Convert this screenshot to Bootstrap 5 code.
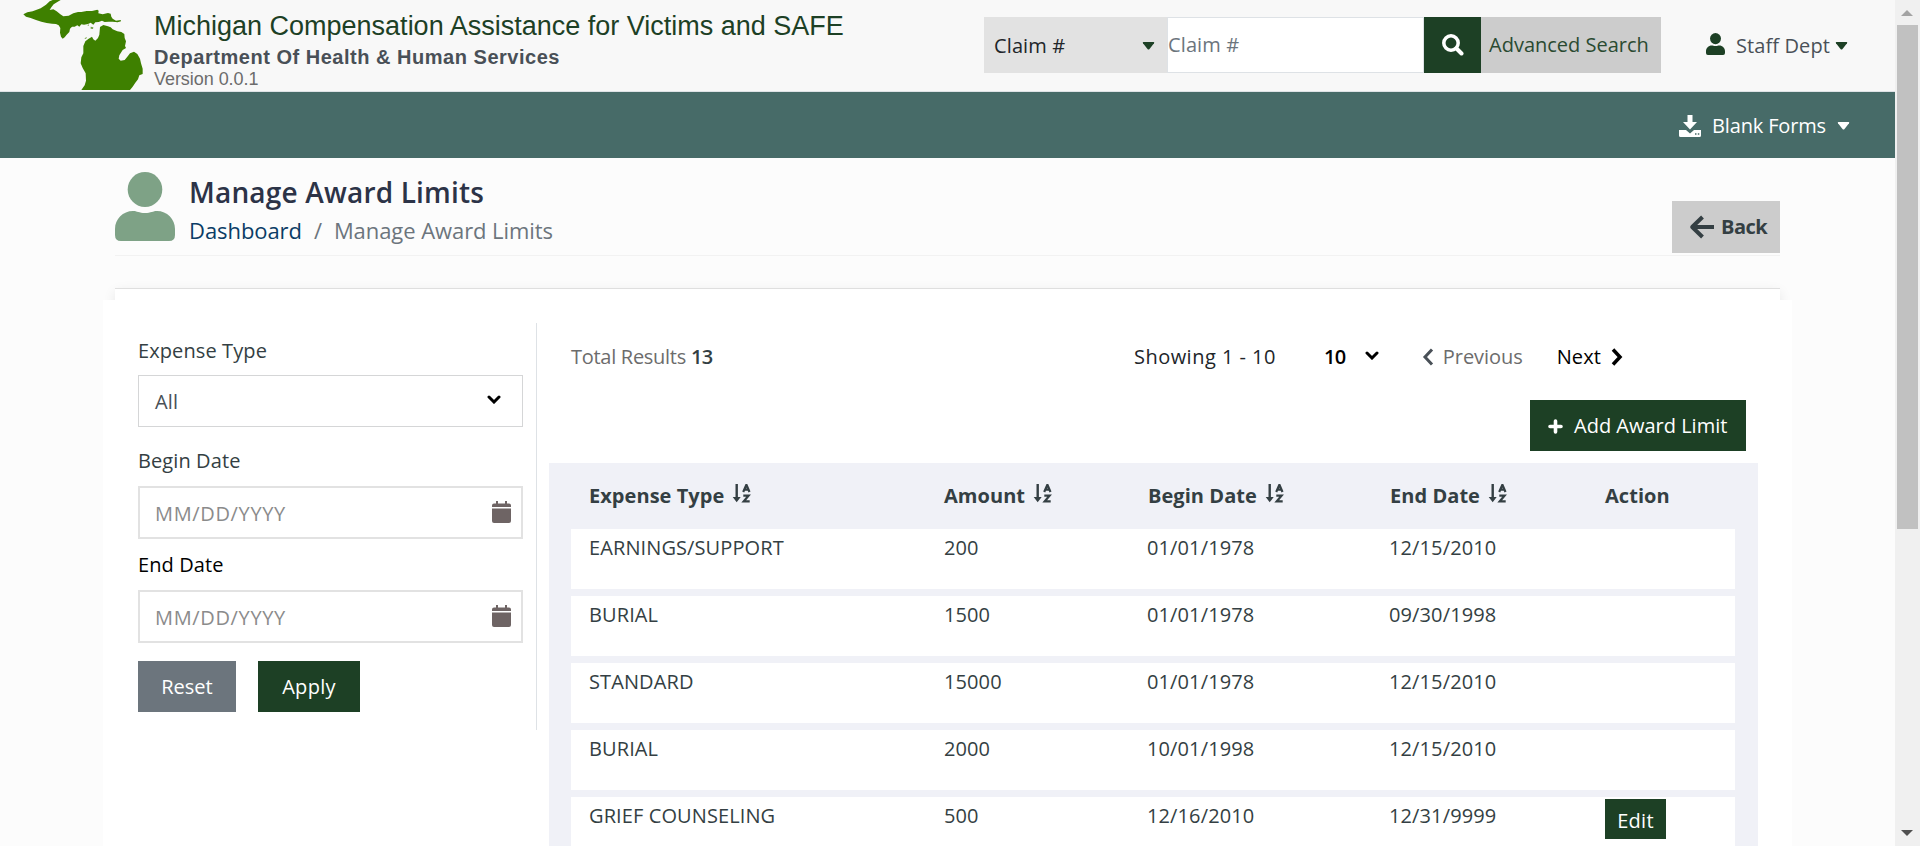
<!DOCTYPE html>
<html lang="en">
<head>
<meta charset="utf-8">
<title>Manage Award Limits</title>
<link href="https://cdn.jsdelivr.net/npm/bootstrap@5.3.0/dist/css/bootstrap.min.css" rel="stylesheet">
<script src="https://cdn.jsdelivr.net/npm/bootstrap@5.3.0/dist/js/bootstrap.bundle.min.js" defer></script>
<style>
:root{--forest:#1d4025;--slate:#343f43}
body{font-family:"Open Sans","Noto Sans",sans-serif;font-size:20px;line-height:30px;letter-spacing:.1px;color:var(--slate);background:#fcfcfc;height:846px;overflow:hidden}
svg{display:block;flex:none}
.page-area{min-width:0}
.top-bar{height:92px;background:#f8f8f8;border-bottom:1px solid #dee2e6;padding-right:47px}
.brand{padding-left:16px;font-family:"Liberation Sans",Arial,sans-serif;letter-spacing:0}
.brand-text{padding-top:10px;margin-left:-2px}
.brand-title{font-size:27px;line-height:33px;color:var(--forest)}
.brand-dept{font-size:20px;line-height:28px;font-weight:700;color:#495057;letter-spacing:.52px}
.brand-ver{font-size:18px;line-height:17px;color:#6c6c6c;letter-spacing:-.05px}
.search-set{margin:17px 45px 0 0;height:56px}
.kind{width:183px;background:#e2e2e2;padding:2px 12px 0 10px;color:#212529}
.claim{width:257px;background:#fff;border:1px solid #dee2e6;color:#6c757d}
.go{width:57px;background:var(--forest);padding-left:18px}
.adv{width:180px;background:#ccc;color:#2a4a31;padding-left:8px;letter-spacing:0}
.staff{height:56px;margin-top:17px;padding-top:2px;color:#495057}
.staff span{margin:0 5px 0 11px}
.menu-bar{height:66px;background:#476b68;color:#fff;font-weight:500;letter-spacing:-.15px;padding:1px 45px 0 0}
.menu-bar span{margin:0 11px}
.page-body{padding:0 115px}
.page-head{height:98px;border-bottom:1px solid #f2f2f2}
.head-icon{margin-top:14px}
.head-text{margin-left:14px;padding-top:14px}
.page-title{font-size:28px;line-height:40px;font-weight:600;letter-spacing:.18px;color:#2c3347;margin:0}
.crumbs{font-size:22px;line-height:34px;margin-top:1px;letter-spacing:-.07px}
.crumbs a{color:#0b3c66;text-decoration:none}
.crumbs span{color:#6c757d}
.back{margin-top:43px;width:108px;height:52px;background:#ccc;border:0;border-radius:0;font-size:20px;font-weight:700;letter-spacing:-.55px;color:var(--slate);padding:0 0 0 17px}
.back span{margin-left:7px}
.sheet{margin-top:32px;height:558px;background:#fff;border-top:1px solid #dfdfdf;box-shadow:0 4px 12px rgba(0,0,0,.09);padding-top:11px}
.sheet-inner{margin:0 -12px;height:546px;background:#fff;padding:23px 34px 0 35px}
.filters{width:399px;height:407px;border-right:1px solid #dee2e6;padding:13px 13px 0 0}
.filters label{display:block;font-weight:500;height:30px}
.field{height:52px;margin-top:9px;border:1px solid #d5d6d7;color:#495057;padding:2px 21px 0 16px;font-weight:500}
.field .chev{margin-bottom:5px}
.date-field{height:53px;margin-top:10px;border:2px solid #e2e2e2;padding:2px 10px 0 15px;color:#8b8b8b;letter-spacing:.65px;font-weight:400}
.lab-begin{margin-top:19px}
.lab-end{margin-top:11px;color:#000}
.acts{margin-top:18px;gap:22px}
.sq{border-radius:0;border:0;font-size:20px;line-height:30px;font-weight:500;height:51px;color:#fff;padding:0}
.sq:hover{color:#fff;background:var(--forest)}
.bg-forest{background:var(--forest)}
.bg-steel{background:#6c757d}
.reset{width:98px}
.apply{width:102px;letter-spacing:.3px}
.results{width:1209px;margin-left:12px}
.pager{height:34px;margin-top:17px;color:#000;white-space:nowrap}
.tot{color:#6c6c6c;padding-left:22px;letter-spacing:-.28px}
.tot b{color:var(--slate);letter-spacing:-.6px}
.shown{letter-spacing:.48px;margin-right:48px;color:#212529}
.per{gap:19px;margin-right:43px;letter-spacing:-.5px}
.prev{gap:9px;margin-right:34px;color:#6c6c6c;letter-spacing:-.05px}
.next{gap:10px;margin-right:135px}
.add-row{margin-top:26px;padding-right:12px}
.add{width:216px;padding:1px 0 0 18px;gap:11px;font-weight:400}
.panel{background:#f0f1f7;height:400px;padding:0 23px 0 22px;margin-top:12px;overflow:hidden}
.limits{width:1164px;table-layout:fixed;border-collapse:separate;border-spacing:0 7px}
.limits th{height:52px;padding:0 0 0 18px;font-weight:700;white-space:nowrap;letter-spacing:.05px}
.limits td{height:60px;background:#fff;padding:4px 0 0 18px;vertical-align:top}
.limits td:nth-child(n+3){padding-left:17px;letter-spacing:.12px}
.limits td:last-child{padding-top:2px}
.limits th:last-child{padding-left:17px}
.c1{width:355px}.c2{width:204px}.c3{width:242px}.c4{width:216px}
.sort{display:inline-block;vertical-align:0;margin-left:8px}
.edit{width:61px;height:40px;letter-spacing:.3px;display:block;padding-top:4px}
.scroll{width:25px;background:#f0f0f0;padding:10px 3px 10px 2px}
.thumb{width:21px;height:504px;margin-top:9px;background:#c1c1c1}
</style>
</head>
<body class="d-flex">
<svg width="0" height="0" class="position-absolute">
<defs>
<symbol id="caret" viewBox="0 0 12 8"><path d="M1 0h10q1.300 0 .5 1.200L7 7q-1 1-2 0L.5 1.200Q-.3 0 1 0z"/></symbol>
<symbol id="person" viewBox="0 0 60 69"><ellipse cx="30" cy="17.500" rx="17.300" ry="17.500"/><path d="M18 39c4 0 6 2 12 2s8-2 12-2c10 0 18 8 18 18v6q0 6-6 6H6q-6 0-6-6v-6c0-10 8-18 18-18z"/></symbol>
<symbol id="cal" viewBox="0 0 19 22"><path d="M4 0h2v2.500h7V0h2v2.500h2q2 0 2 2V6H0V4.500q0-2 2-2h2zM0 7.500h19V20q0 2-2 2H2q-2 0-2-2z"/></symbol>
<symbol id="chev" viewBox="0 0 14 9"><path d="M2 2l5 5 5-5" fill="none" stroke="#000" stroke-width="3" stroke-linecap="round"/></symbol>
<symbol id="az" viewBox="0 0 18 19"><path d="M3 0h2.400v13H8.200l-4 5.300L.2 13H3z"/><path d="M10.700 8l3.200-7.300L17 8M12 5.700h4" fill="none" stroke="currentColor" stroke-width="2.200"/><path d="M10.800 11.700h5.200L11.300 17.300H17.200" fill="none" stroke="currentColor" stroke-width="2.300"/></symbol>
</defs>
</svg>
<main class="page-area flex-grow-1">
<header class="top-bar d-flex">
 <div class="brand d-flex me-auto">
  <svg width="140" height="90" viewBox="0 0 420 270" fill="#3e8000"><path d="M22 43L34 37 50 34 74 25 90 14 101 4 110 0H134L124 6 113 13 106 22 101 30 112 28 122 34 133 43 142 49 158 47 172 40 186 36 196 36 212 33 228 33 244 29 248 32 247 40 260 43 276 39 284 41 286 50 290 56 300 62 314 60 315 64 305 67 290 65 278 65 266 66 258 62 248 66 238 67 232 74 224 68 216 72 204 74 196 73 190 80 184 76 176 80 168 80 162 86 160 96 152 104 146 112 140 116 135 110 132 98 133 84 128 76 120 72 108 71 92 69 76 65 60 60 44 54 30 50z"/><path d="M252 81L262 75 276 79 284 82 290 88 304 94 316 96 325 102 326 114 330 124 327 138 330 144 320 150 310 166 308 176 314 182 326 180 334 170 342 160 354 155 364 162 372 176 375 190 380 206 380 222 370 226 366 238 358 248 350 260 342 270H196L206 256 210 242 209 220 200 204 194 190 196 172 202 160 202 138 208 124 218 116 228 110 232 118 238 122 246 114 250 104z"/><path d="M224 80l8 2-1 5-7-1zM205 115l8-4-3 6zM214 76l5-3-1 5z" opacity=".7"/></svg>
  <div class="brand-text">
   <div class="brand-title">Michigan Compensation Assistance for Victims and SAFE</div>
   <div class="brand-dept">Department Of Health &amp; Human Services</div>
   <div class="brand-ver">Version 0.0.1</div>
  </div>
 </div>
 <div class="search-set d-flex">
  <div class="kind d-flex align-items-center justify-content-between">Claim #<svg width="13" height="8" fill="#1d4025"><use href="#caret"/></svg></div>
  <div class="claim d-flex align-items-center">Claim #</div>
  <div class="go d-flex align-items-center"><svg width="22" height="22" viewBox="0 0 22 22" fill="none" stroke="#fff"><circle cx="9" cy="9" r="7.200" stroke-width="3.500"/><path d="M14.500 14.500l5 5" stroke-width="4" stroke-linecap="round"/></svg></div>
  <div class="adv d-flex align-items-center">Advanced Search</div>
 </div>
 <div class="staff d-flex align-items-center"><svg class="mb-1" width="19" height="22" fill="#1d4025"><use href="#person"/></svg><span>Staff Dept</span><svg width="13" height="8" fill="#1d4025"><use href="#caret"/></svg></div>
</header>
<nav class="menu-bar d-flex align-items-center justify-content-end">
 <svg width="22" height="22" viewBox="0 0 22 22" fill="#fff"><path d="M8.500 0h5v7h4.500L11 14.500 4 7h4.500zM0 15h7l4 3.500L15 15h7v5.500q0 1.500-1.500 1.500h-19Q0 22 0 20.500z"/><path d="M16 19h1.500M18.800 19h1.500" stroke="#476b68" stroke-width="1.300"/></svg>
 <span>Blank Forms</span><svg width="13" height="8" fill="#fff"><use href="#caret"/></svg>
</nav>
<div class="page-body">
 <div class="page-head d-flex align-items-start">
  <svg class="head-icon" width="60" height="69" fill="#7ea286"><use href="#person"/></svg>
  <div class="head-text me-auto">
   <h1 class="page-title">Manage Award Limits</h1>
   <div class="crumbs"><a href="#">Dashboard</a><span class="px-2 mx-1">/</span><span>Manage Award Limits</span></div>
  </div>
  <button class="back btn d-flex align-items-center"><svg width="25" height="24" viewBox="0 0 25 24" fill="none" stroke="#343f43" stroke-width="4"><path d="M3 12h22M13.500 2L3.200 12l10.300 10" stroke-linejoin="round"/></svg><span>Back</span></button>
 </div>
 <section class="sheet">
  <div class="sheet-inner d-flex">
   <form class="filters">
    <label>Expense Type</label>
    <div class="field d-flex align-items-center justify-content-between"><span>All</span><svg class="chev" width="14" height="9"><use href="#chev"/></svg></div>
    <label class="lab-begin">Begin Date</label>
    <div class="field date-field d-flex align-items-center justify-content-between"><span>MM/DD/YYYY</span><svg class="mb-1" width="19" height="22" fill="#6e6464"><use href="#cal"/></svg></div>
    <label class="lab-end">End Date</label>
    <div class="field date-field d-flex align-items-center justify-content-between"><span>MM/DD/YYYY</span><svg class="mb-1" width="19" height="22" fill="#6e6464"><use href="#cal"/></svg></div>
    <div class="d-flex acts"><button type="button" class="btn sq bg-steel reset">Reset</button><button type="button" class="btn sq bg-forest apply">Apply</button></div>
   </form>
   <div class="results">
    <div class="pager d-flex align-items-center">
     <span class="tot me-auto">Total Results <b class="fw-semibold">13</b></span>
     <span class="shown">Showing 1 - 10</span>
     <span class="per d-flex align-items-center fw-semibold">10<svg class="mb-1" width="14" height="9"><use href="#chev"/></svg></span>
     <span class="prev d-flex align-items-center"><svg width="12" height="18" viewBox="0 0 12 18" fill="none" stroke="#495057" stroke-width="3"><path d="M10 1.500L3 9l7 7.500"/></svg><span>Previous</span></span>
     <span class="next d-flex align-items-center"><span>Next</span><svg width="12" height="18" viewBox="0 0 12 18" fill="none" stroke="#000" stroke-width="3.500"><path d="M2 1.500L9 9l-7 7.500"/></svg></span>
    </div>
    <div class="d-flex justify-content-end add-row"><button class="btn sq bg-forest add d-flex align-items-center"><svg width="15" height="15" viewBox="0 0 15 15" stroke="#fff" stroke-width="3.600" stroke-linecap="round"><path d="M7.500 2v11M2 7.500h11"/></svg><span>Add Award Limit</span></button></div>
    <div class="panel">
     <table class="limits">
      <colgroup><col class="c1"><col class="c2"><col class="c3"><col class="c4"><col></colgroup>
      <thead><tr><th>Expense Type<svg class="sort" width="19" height="19" fill="currentColor"><use href="#az"/></svg></th><th>Amount<svg class="sort" width="19" height="19" fill="currentColor"><use href="#az"/></svg></th><th>Begin Date<svg class="sort" width="19" height="19" fill="currentColor"><use href="#az"/></svg></th><th>End Date<svg class="sort" width="19" height="19" fill="currentColor"><use href="#az"/></svg></th><th>Action</th></tr></thead>
      <tbody>
       <tr><td>EARNINGS/SUPPORT</td><td>200</td><td>01/01/1978</td><td>12/15/2010</td><td></td></tr>
       <tr><td>BURIAL</td><td>1500</td><td>01/01/1978</td><td>09/30/1998</td><td></td></tr>
       <tr><td>STANDARD</td><td>15000</td><td>01/01/1978</td><td>12/15/2010</td><td></td></tr>
       <tr><td>BURIAL</td><td>2000</td><td>10/01/1998</td><td>12/15/2010</td><td></td></tr>
       <tr><td>GRIEF COUNSELING</td><td>500</td><td>12/16/2010</td><td>12/31/9999</td><td><button class="btn sq bg-forest edit">Edit</button></td></tr>
      </tbody>
     </table>
    </div>
   </div>
  </div>
 </section>
</div>
</main>
<aside class="scroll d-flex flex-column align-items-center">
 <svg width="12" height="6" viewBox="0 0 12 6" fill="#a3a3a3"><path d="M6 0l6 6H0z"/></svg>
 <div class="thumb"></div>
 <svg class="mt-auto" width="12" height="6" viewBox="0 0 12 6" fill="#505050"><path d="M0 0h12L6 6z"/></svg>
</aside>
</body>
</html>
